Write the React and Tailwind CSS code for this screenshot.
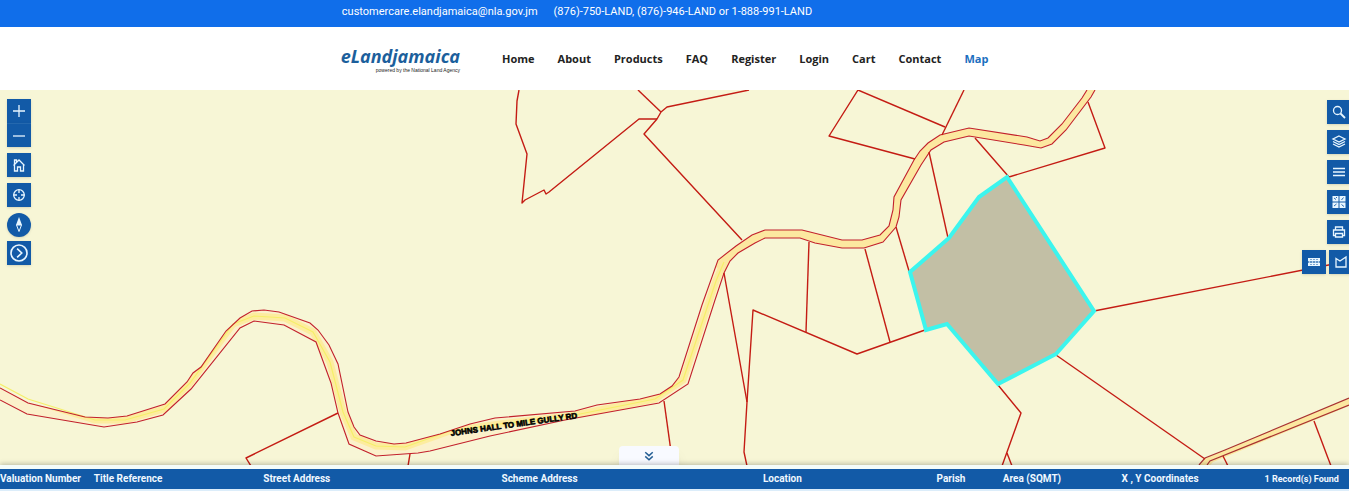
import React from "react";

const nav = ["Home", "About", "Products", "FAQ", "Register", "Login", "Cart", "Contact", "Map"];

const upperEdge =
  "M0 388 28 403 85 417 108 418 127 416 165 404 187 382 193 373 201 367 226 331 240 318 252 311 264 310 279 312 310 323 318 330 329 345 338 364 348 412 354 427 360 435 376 441 394 444 406 443 440 434 470 424 495 418 575 411 597 405 640 399 660 394 672 386 679 377 702 305 718 260 736 246 752 235 765 230 802 230 842 240 862 240 880 235 889 226 893 210 894 197 914 160 920 151 928 143 940 135 969 128 1027 137 1040 141 1048 138 1062 124 1082 98 1087 90";
const lowerEdge =
  "1095 90 1091 97 1066 130 1052 144 1041 148 1024 145 969 136 944 142 931 150 921 165 901 200 899 217 896 227 883 242 864 248 842 248 815 243 800 238 765 238 755 243 738 253 730 261 724 273 715 300 688 384 659 403 565 420 490 436 430 451 418 453 376 456 349 444 338 413 331 383 316 342 284 325 254 321 240 328 191 389 163 415 137 422 104 427 27 414 0 400";
const centerLine =
  "M0 384 28 399 60 409 95 420 125 420 164 409 190 383 233 324 254 316 285 318 313 332 330 362 343 412 354 437 376 446 405 447 450 431 500 424 570 416 655 399 683 380 716 281 724 262";

const parcels = [
  "M519 90 517 101 516 124 527 154 522 203 525 200 544 190 546 194 549 192 639 119 644 119 657 119",
  "M638 90 661 112",
  "M749 90 667 107 661 112 657 119 644 134 742 240",
  "M858 90 829 136 915 159",
  "M858 90 945 127",
  "M964 90 942 135",
  "M1088 102 1105 148 1009 177 975 138",
  "M929 152 948 238",
  "M896 227 909 271",
  "M865 249 890 342",
  "M809 242 806 332",
  "M925 330 857 354 753 310 747 402",
  "M724 273 747 402 744 452 747 466",
  "M664 401 673 466",
  "M338 413 246 458 251 466",
  "M410 454 408 466",
  "M1094 311 1349 261",
  "M1056 355 1205 459",
  "M998 385 1021 413 1002 466",
  "M1007 453 1012 466",
  "M1223 456 1228 466",
  "M1314 421 1331 466",
];

const tool = "flex size-6 items-center justify-center bg-[#125aa7] text-[#e8f6ff] shadow-sm";

function Icon({ children, className = "size-4" }) {
  return (
    <svg viewBox="0 0 16 16" className={className} fill="none" stroke="currentColor" strokeWidth="1.3" aria-hidden="true">
      {children}
    </svg>
  );
}

function Tool({ label, className = "", children }) {
  return (
    <button type="button" aria-label={label} className={`${tool} ${className}`}>
      {children}
    </button>
  );
}

function MapCanvas() {
  return (
    <svg viewBox="0 90 1349 375" preserveAspectRatio="xMidYMid slice" className="absolute inset-0 h-full w-full">
      <defs>
        <clipPath id="road">
          <path d={`${upperEdge} ${lowerEdge}Z`} />
        </clipPath>
      </defs>
      <rect y="90" width="1349" height="375" fill="#f7f6d6" />
      <path d={`${upperEdge} ${lowerEdge}Z`} fill="#fbf1cb" />
      <g clipPath="url(#road)" fill="none">
        <path d={centerLine} stroke="#fdec9f" strokeWidth="7" />
        <path
          d="M720 270 732 253 753 240 765 234 802 234 842 244 863 244 882 238 892 227 897 199 917 161 929 147 941 139 969 132 1027 141 1041 145 1050 141 1064 127 1086 98 1093 86"
          stroke="#fce8a0"
          strokeWidth="14"
        />
      </g>
      <path d={centerLine} fill="none" stroke="#f5ef6a" strokeWidth="1.2" />
      <g fill="none" stroke="#c2202c" strokeWidth="1.1">
        <path d={upperEdge} />
        <path d={`M${lowerEdge}`} />
      </g>
      <path d="M1199 465 1206 458 1349 398V406L1213 462 1210 465Z" fill="#fce8a0" />
      <path d="M1199 465 1205 458 1225 450 1349 398M1207 465 1210 461 1349 405" fill="none" stroke="#a83232" strokeWidth="1.2" />
      <g fill="none" stroke="#c41c14" strokeWidth="1.4" strokeLinejoin="round">
        {parcels.map((d) => (
          <path key={d} d={d} />
        ))}
      </g>
      <path
        d="M1007 177 1094 311 1056 354 998 384 947 324 926 330 910 272 949 238 979 197Z"
        fill="#c2bfa5"
        stroke="#3cf5ee"
        strokeWidth="4"
      />
      <text
        transform="translate(451 436) rotate(-8)"
        fontFamily="Liberation Sans, Arial, sans-serif"
        fontSize="8"
        fontWeight="700"
        fill="#000"
        stroke="#000"
        strokeWidth="0.6"
      >
        JOHNS HALL TO MILE GULLY RD
      </text>
    </svg>
  );
}

export default function App() {
  return (
    <div className="flex min-h-screen flex-col overflow-hidden bg-white font-['Roboto',sans-serif]">
      <div className="flex h-[27px] justify-center gap-4 bg-[#106eea] pt-1 pr-[195px] text-[11px] leading-4 text-white">
        <a href="mailto:customercare.elandjamaica@nla.gov.jm">customercare.elandjamaica@nla.gov.jm</a>
        <span>(876)-750-LAND, (876)-946-LAND or 1-888-991-LAND</span>
      </div>

      <header className="flex h-[63px] items-center justify-center gap-[42px] pr-5 font-['Open_Sans',sans-serif]">
        <a href="#home" className="flex flex-col items-end text-[#1c5f9c]">
          <span className="text-[18px] leading-6 font-bold italic">eLandjamaica</span>
          <span className="font-['Liberation_Sans',sans-serif] text-[5px] leading-[5px] text-[#222]">
            powered by the National Land Agency
          </span>
        </a>
        <nav className="flex gap-[23px] text-[11px] leading-4 font-bold text-[#222]">
          {nav.map((item) => (
            <a key={item} href={`#${item.toLowerCase()}`} className={item === "Map" ? "text-[#1b6fc0]" : ""}>
              {item}
            </a>
          ))}
        </nav>
      </header>

      <main className="relative flex flex-1 flex-col overflow-hidden">
        <MapCanvas />
        <div className="relative flex flex-1 justify-between">
          <div className="flex flex-col gap-1.5 pt-[9px] pl-[7px]">
            <div className="flex flex-col">
              <Tool label="Zoom in">
                <Icon><path d="M8 2v12M2 8h12" /></Icon>
              </Tool>
              <Tool label="Zoom out" className="border-t border-[#2468ae]">
                <Icon><path d="M2 8h12" /></Icon>
              </Tool>
            </div>
            <Tool label="Home">
              <Icon><path d="M2.500 8.500 8 3l5.500 5.500M3.500 8v6h3v-4h3v4h3V8M3.500 7V3h2v2" /></Icon>
            </Tool>
            <Tool label="Locate">
              <Icon><circle cx="8" cy="8" r="5.300" /><path d="M8 2.500v3.500M8 10v3.500M2.500 8H6M10 8h3.500" /></Icon>
            </Tool>
            <div className="flex flex-col gap-1">
              <Tool label="Compass" className="rounded-full">
                <Icon>
                  <path d="M8 0 5 8h6Z" fill="currentColor" stroke="none" />
                  <path d="M5.500 8 8 14.500l2.500-6.500Z" strokeWidth="1" />
                </Icon>
              </Tool>
              <Tool label="Expand">
                <Icon className="size-5"><circle cx="8" cy="8" r="6.400" /><path d="m6.500 4.500 3.700 3.500-3.700 3.500" /></Icon>
              </Tool>
            </div>
          </div>

          <div className="-mr-0.5 flex flex-col items-end gap-1.5 pt-2.5">
            <Tool label="Search">
              <Icon><circle cx="6.500" cy="6.500" r="4" /><path d="m9.500 9.500 4.500 4.500" strokeWidth="1.800" /></Icon>
            </Tool>
            <Tool label="Layers">
              <Icon>
                <path d="m8 2 6 3-6 3-6-3Z" />
                <path d="m2 7.500 6 3 6-3M2 10l6 3 6-3" />
              </Icon>
            </Tool>
            <Tool label="Legend">
              <Icon><path d="M2 4.500h12M2 8h12M2 11.500h12" /></Icon>
            </Tool>
            <Tool label="Basemaps">
              <Icon>
                <path d="M1.500 2h6v5.500h-6ZM8.500 2h6v5.500h-6ZM1.500 8.500h6V14h-6ZM8.500 8.500h6V14h-6Z" fill="currentColor" stroke="none" />
                <path d="m3 4 2 1.500M5 3l1 1M10.500 6l2-2.500M3 12l2.500-2M10.500 10.500l2.500 2" stroke="#125aa7" strokeWidth="0.900" />
              </Icon>
            </Tool>
            <Tool label="Print">
              <Icon><path d="M4.500 6V3h7v3M4.500 11.500h-2V6h11v5.500h-2M4.500 9.500h7V13h-7Z" /></Icon>
            </Tool>
            <div className="-mr-0.5 flex gap-[3px]">
              <Tool label="Measure distance">
                <Icon>
                  <path d="M2 4h12v3H2ZM2 9h12v3H2Z" fill="currentColor" stroke="none" />
                  <path d="M2.500 8h11" strokeDasharray="2 1" />
                  <path d="M5 5v1M8 5v1M11 5v1M5 10v1M8 10v1M11 10v1" stroke="#125aa7" strokeWidth="1" />
                </Icon>
              </Tool>
              <Tool label="Measure area">
                <Icon><path d="M3 4.500 7 7l6-4v10H3Z" /></Icon>
              </Tool>
            </div>
          </div>
        </div>
        <div className="relative flex justify-center pr-[51px]">
          <button
            type="button"
            aria-label="Hide results"
            className="flex h-[19px] w-[60px] items-center justify-center rounded-t bg-[#f8faff] text-[#255f94] shadow-lg"
          >
            <Icon className="size-3"><path d="m3 3 5 4.500L13 3M3 8.500 8 13l5-4.500" strokeWidth="2" /></Icon>
          </button>
        </div>
      </main>

      <div className="relative border-t-4 border-b-2 border-t-[#f4fcfa] border-b-[#dcedfa] bg-[#125aa7] shadow-[0_-1px_5px_rgba(0,0,0,0.25)]">
        <table className="w-full table-fixed text-[10px] leading-[20px] font-bold whitespace-nowrap text-[#f0f8ff]">
          <thead>
            <tr>
              <th className="w-[6%]">Valuation Number</th>
              <th className="w-[7%]">Title Reference</th>
              <th className="w-[18%]">Street Address</th>
              <th className="w-[18%]">Scheme Address</th>
              <th className="w-[18%]">Location</th>
              <th className="w-[7%]">Parish</th>
              <th className="w-[5%]">Area (SQMT)</th>
              <th className="w-[14%]">X , Y Coordinates</th>
              <th className="w-[7%] text-[9px]">1 Record(s) Found</th>
            </tr>
          </thead>
        </table>
      </div>
    </div>
  );
}
